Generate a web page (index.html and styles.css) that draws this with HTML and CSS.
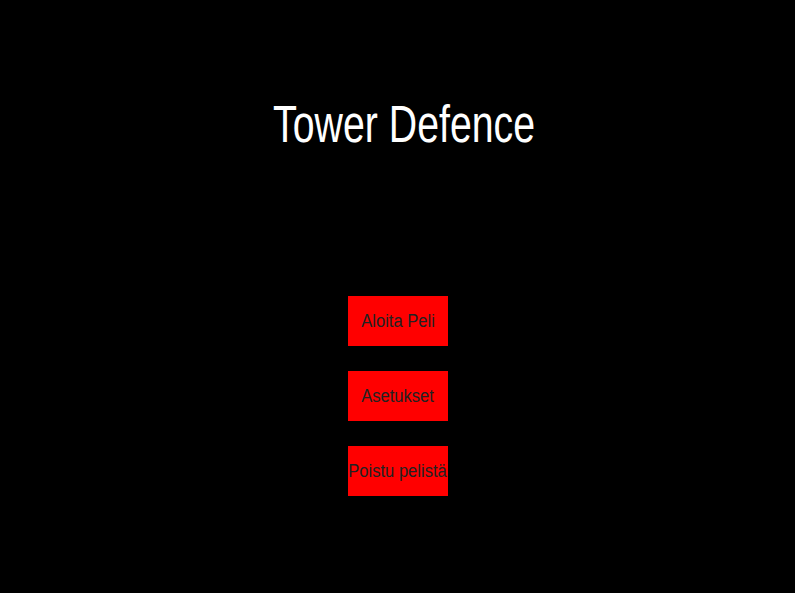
FILE: index.html
```html
<!DOCTYPE html>
<html>
<head>
<meta charset="utf-8">
<link rel="stylesheet" href="styles.css">
</head>
<body>
<main class="menu">
  <h1 class="title"><span class="title-text">Tower Defence</span></h1>
  <nav class="buttons">
    <button class="btn"><span class="btn-text">Aloita Peli</span></button>
    <button class="btn"><span class="btn-text">Asetukset</span></button>
    <button class="btn"><span class="btn-text">Poistu pelistä</span></button>
  </nav>
</main>
</body>
</html>
```
FILE: styles.css
```css
html, body {
  margin: 0;
  padding: 0;
  background: #000;
  height: 100%;
}
.menu {
  display: flex;
  flex-direction: column;
  align-items: center;
  font-family: "Liberation Sans", Arial, sans-serif;
}
.title {
  margin: 96px 0 0 13px;
  color: #fff;
  font-weight: normal;
  font-size: 51px;
  line-height: 58px;
  white-space: nowrap;
}
.title-text {
  display: inline-block;
  transform: scaleX(0.77);
  transform-origin: center;
}
.buttons {
  display: flex;
  flex-direction: column;
  gap: 25px;
  margin-top: 142px;
  margin-left: 1px;
}
.btn {
  display: flex;
  justify-content: center;
  align-items: center;
  width: 100px;
  height: 50px;
  padding: 0;
  border: none;
  background: #ff0000;
  color: #222;
  font-family: "Liberation Sans", Arial, sans-serif;
  font-size: 18px;
  white-space: nowrap;
}
.btn-text {
  display: inline-block;
  flex-shrink: 0;
  transform: scaleX(0.92);
  transform-origin: center;
}
```
